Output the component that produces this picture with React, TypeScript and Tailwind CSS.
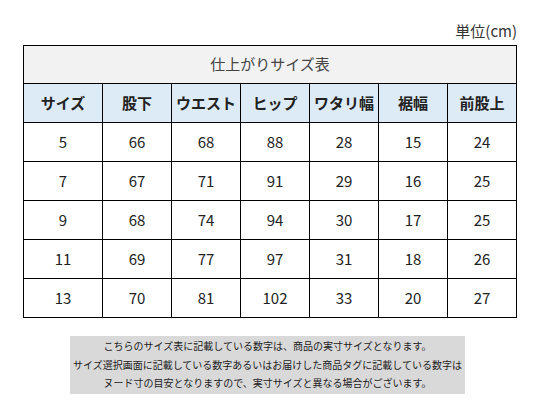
import React from "react";

const headers = ["サイズ", "股下", "ウエスト", "ヒップ", "ワタリ幅", "裾幅", "前股上"];
const rows = [
  ["5", "66", "68", "88", "28", "15", "24"],
  ["7", "67", "71", "91", "29", "16", "25"],
  ["9", "68", "74", "94", "30", "17", "25"],
  ["11", "69", "77", "97", "31", "18", "26"],
  ["13", "70", "81", "102", "33", "20", "27"],
];

export default function App() {
  return (
    <div
      className="w-[541px] h-[407px] bg-white text-[#222]"
      style={{ fontFamily: '"Noto Sans CJK JP", "Noto Sans", sans-serif' }}
    >
      <div className="pt-[21px] h-[45px] w-[517px] flex justify-end">
        <span className="text-[15px] leading-[20px] text-[#333]">単位(cm)</span>
      </div>
      <div className="ml-[23px] w-[494px] bg-black p-px flex flex-col gap-px">
        <div className="h-[37px] bg-[#f2f2f2] flex items-center justify-center text-[15px] text-[#444]">
          仕上がりサイズ表
        </div>
        <div className="grid grid-cols-[78px_repeat(6,68px)] gap-px">
          {headers.map((h) => (
            <div
              key={h}
              className="h-[38px] bg-[#ddebf7] flex items-center justify-center text-[15px] font-bold text-[#222]"
            >
              {h}
            </div>
          ))}
          {rows.map((r, i) =>
            r.map((c, j) => (
              <div
                key={`${i}-${j}`}
                className="h-[38px] bg-white flex items-center justify-center text-[15px] text-[#222]"
              >
                {c}
              </div>
            ))
          )}
        </div>
      </div>
      <div className="mt-[18px] ml-[70px] w-[395px] h-[58px] bg-[#d9d9d9] flex flex-col items-center justify-center text-[10px] leading-[18.5px] text-[#222] whitespace-nowrap">
        <div>こちらのサイズ表に記載している数字は、商品の実寸サイズとなります。</div>
        <div>サイズ選択画面に記載している数字あるいはお届けした商品タグに記載している数字は</div>
        <div>ヌード寸の目安となりますので、実寸サイズと異なる場合がございます。</div>
      </div>
    </div>
  );
}
